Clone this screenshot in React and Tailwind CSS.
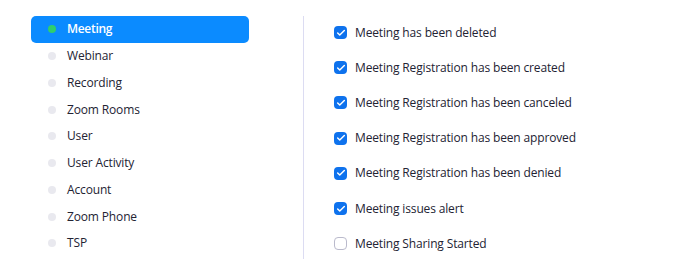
import { Check } from 'lucide-react';

const categories = [
  'Meeting',
  'Webinar',
  'Recording',
  'Zoom Rooms',
  'User',
  'User Activity',
  'Account',
  'Zoom Phone',
  'TSP',
];

const events = [
  { label: 'Meeting has been deleted', checked: true },
  { label: 'Meeting Registration has been created', checked: true },
  { label: 'Meeting Registration has been canceled', checked: true },
  { label: 'Meeting Registration has been approved', checked: true },
  { label: 'Meeting Registration has been denied', checked: true },
  { label: 'Meeting issues alert', checked: true },
  { label: 'Meeting Sharing Started', checked: false },
];

export default function App() {
  const active = 'Meeting';

  return (
    <div
      className="w-[690px] h-[259px] bg-white overflow-hidden flex text-[#232333] tracking-[-0.15px]"
      style={{ fontFamily: '"Open Sans", "Noto Sans", sans-serif' }}
    >
      {/* left nav */}
      <div className="w-[303px] shrink-0 pl-[31px] pr-[54px] pt-[16px]">
        {categories.map((name) => {
          const isActive = name === active;
          return (
            <div
              key={name}
              className={`h-[26.75px] flex items-center rounded-[5px] pl-[17px] gap-[11px] text-[12px] ${
                isActive ? 'bg-[#0b8bff] text-white font-semibold tracking-[-0.3px]' : ''
              }`}
            >
              <span
                className={`w-[8px] h-[8px] rounded-full ${
                  isActive ? 'bg-[#2fce6e]' : 'bg-[#e9e9ef]'
                }`}
              />
              <span>{name}</span>
            </div>
          );
        })}
      </div>

      {/* divider */}
      <div className="w-px mt-[16px] bg-[#dcdcf2]" />

      {/* events */}
      <div className="flex-1 pl-[30px] pt-[15px]">
        {events.map((ev) => (
          <div key={ev.label} className="h-[35.2px] flex items-center gap-[8px] text-[12px]">
            {ev.checked ? (
              <span className="w-[13px] h-[13px] rounded-[4px] bg-[#0e72ed] flex items-center justify-center">
                <Check className="w-[10px] h-[10px] text-white" strokeWidth={3.5} />
              </span>
            ) : (
              <span className="w-[13px] h-[13px] rounded-[4px] border border-[#babacc] bg-white" />
            )}
            <span>{ev.label}</span>
          </div>
        ))}
      </div>
    </div>
  );
}
